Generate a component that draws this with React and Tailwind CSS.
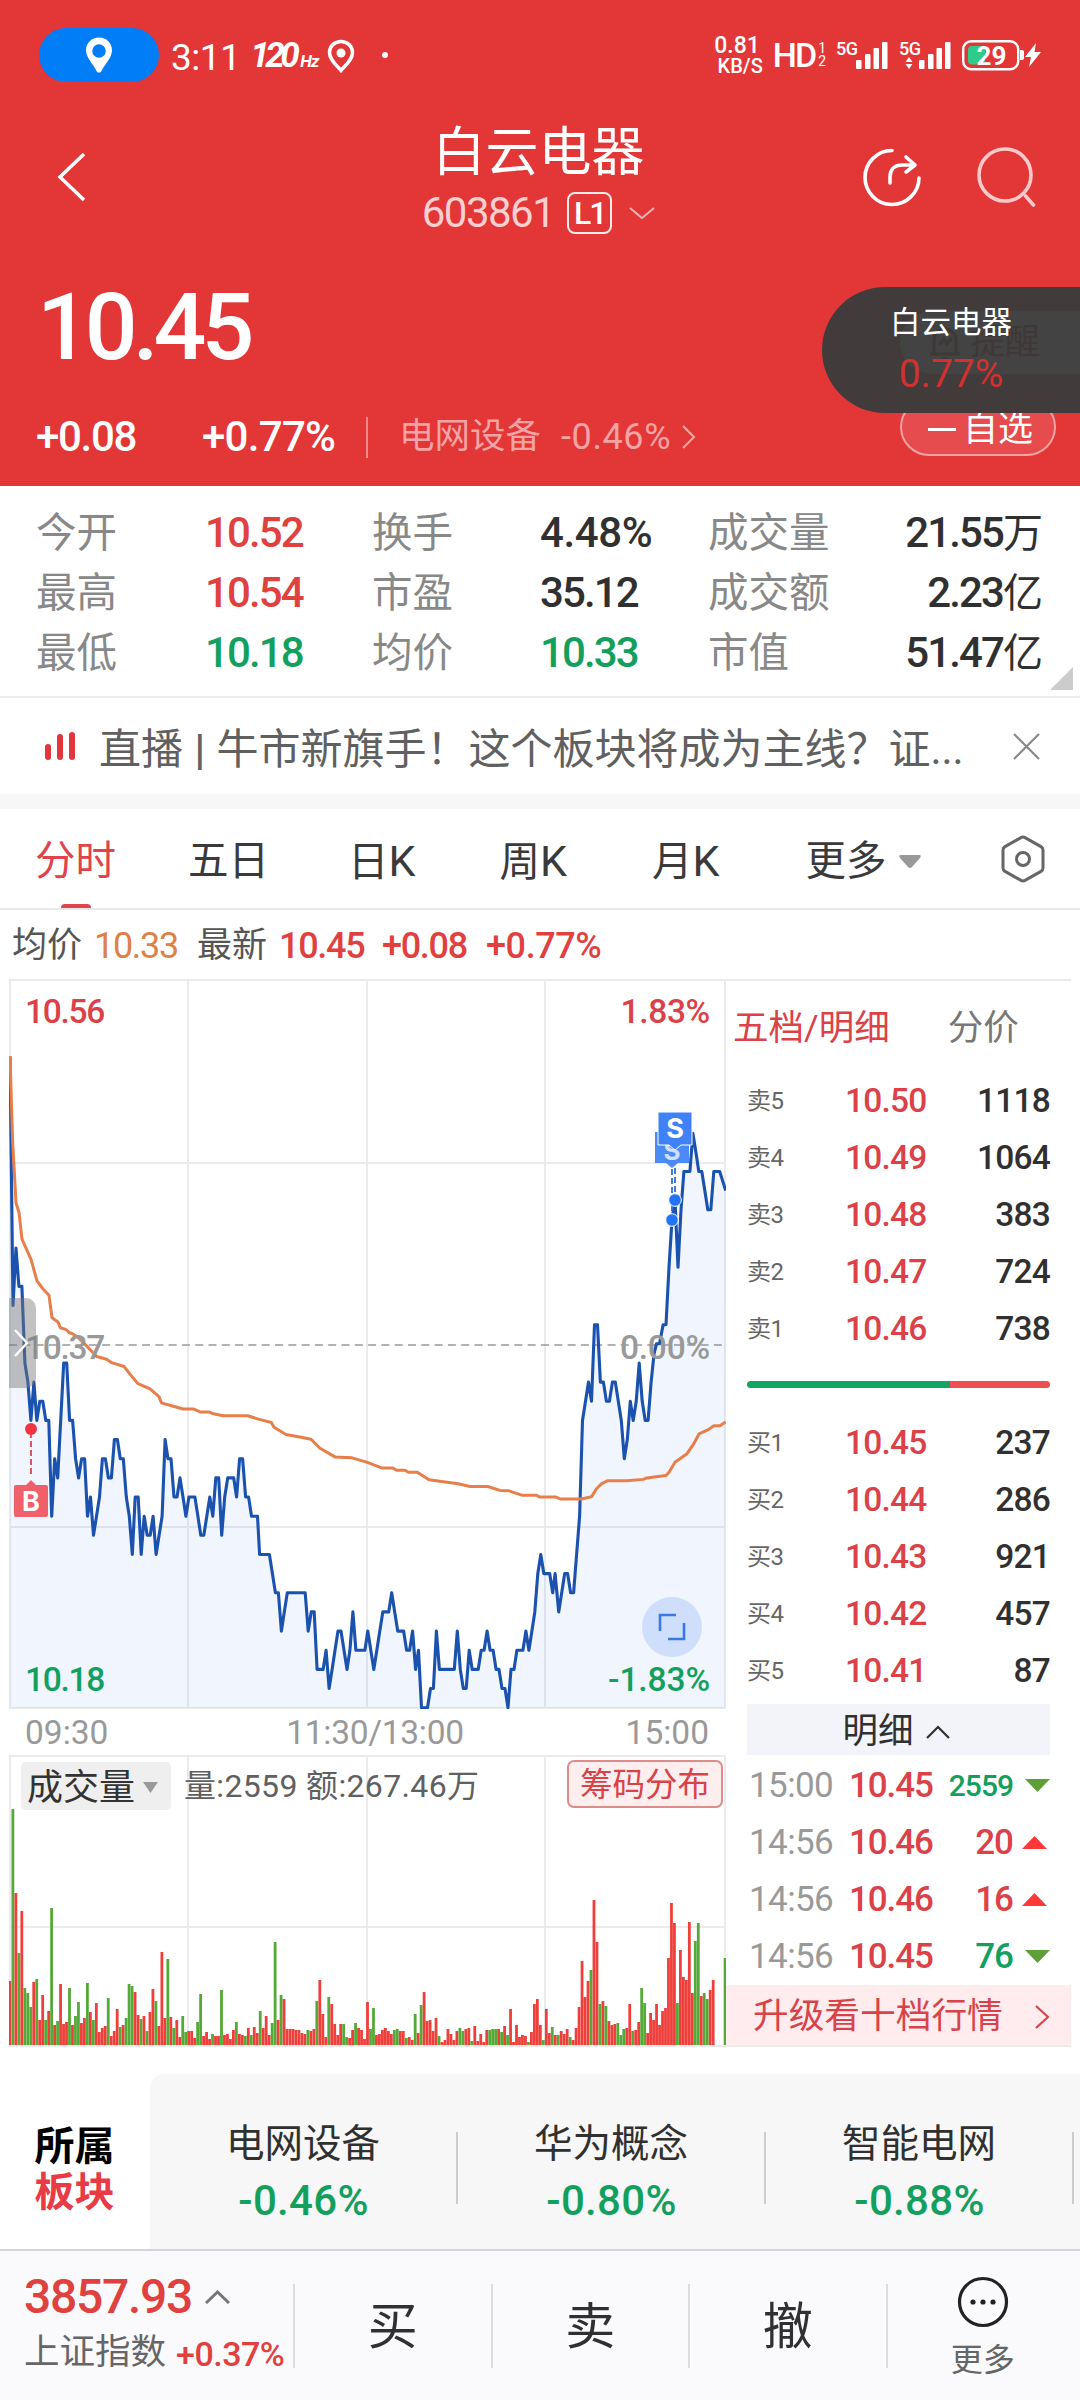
import { clsx } from "clsx";

// Quote summary under the header
const stats = [
  { label: "今开", value: "10.52", color: "text-[#e0413f]" },
  { label: "换手", value: "4.48%", color: "text-[#303030]" },
  { label: "成交量", value: "21.55", unit: "万", color: "text-[#303030]" },
  { label: "最高", value: "10.54", color: "text-[#e0413f]" },
  { label: "市盈", value: "35.12", color: "text-[#303030]" },
  { label: "成交额", value: "2.23", unit: "亿", color: "text-[#303030]" },
  { label: "最低", value: "10.18", color: "text-[#13a05e]" },
  { label: "均价", value: "10.33", color: "text-[#13a05e]" },
  { label: "市值", value: "51.47", unit: "亿", color: "text-[#303030]" },
];

const sells = [
  ["卖5", "10.50", "1118"],
  ["卖4", "10.49", "1064"],
  ["卖3", "10.48", "383"],
  ["卖2", "10.47", "724"],
  ["卖1", "10.46", "738"],
];

const buys = [
  ["买1", "10.45", "237"],
  ["买2", "10.44", "286"],
  ["买3", "10.43", "921"],
  ["买4", "10.42", "457"],
  ["买5", "10.41", "87"],
];

const ticks = [
  { time: "15:00", price: "10.45", qty: "2559", up: false },
  { time: "14:56", price: "10.46", qty: "20", up: true },
  { time: "14:56", price: "10.46", qty: "16", up: true },
  { time: "14:56", price: "10.45", qty: "76", up: false },
];

const boards = [
  { name: "电网设备", change: "-0.46%" },
  { name: "华为概念", change: "-0.80%" },
  { name: "智能电网", change: "-0.88%" },
];

// minute,cents above 10.00
const priceSeries =
  "0,52 1,39 2,42 3,40 4,40 5,36 6,35 7,33 8,35 9,33 10,34 11,34 12,33 13,33 14,28 15,31 16,30 17,33 18,36 19,36 20,33 21,33 22,31 23,30 24,31 25,31 26,28 27,29 28,27 29,28 30,29 31,31 32,31 33,30 34,30 35,32 36,32 37,31 38,31 39,29 40,28 41,26 42,29 43,29 44,26 45,28 46,27 47,27 48,28 49,26 50,27 51,28 52,32 53,31 54,31 55,29 56,29 57,30 58,29 59,28 60,29 62,29 63,28 64,27 65,27 66,28 67,29 68,28 69,30 70,30 71,27 72,29 73,30 75,30 76,29 77,31 78,31 79,29 80,29 81,28 83,28 83.7,26 87,26 88,25 89,24 90,24 91,22 92,23 93,24 99,24 100,22 101,23 102,23 103,20 105,20 106,21 107,19 108,20 109,21 110,22 111,22 112,21 113,20 114,21 115,23 116,21 119,21 120,22 121,21 122,20 123,21 124,22 125,23 127,23 128,24 129,23 130,22 132,22 133,21 134,21 135,22 136,20 137,21 138,18 140,18 141,19 142,19 143,22 144,20 149,20 150,22 151,20 152,19 153,19 154,21 155,20 157,20 158,21 159,21 160,22 161,21 162,21 163,20 164,20 165,19 166,19 167,18 168,20 169,20 170,21 172,21 173,22 174,21 175,22 176,23 177,25 178,26 179,25 181,25 182,24 182.8,25 184,23 185,24 186,25 187,25 188,24 189,24 190,26 191,28 192,33 193,34 194,35 195,34 196,38 197,38 198,35 199,35 200,34 201,34 202,35 203,35 204,34 205,33 206,31 207,32 208,34 209,33 210,34 211,36 212,34 213,33 214,33 215,35 216,36.5 216.8,37 217.8,37 219,38 220,38 221,41 222,43.5 223,44.5 224,41 225,44 226,46 228,46 229,48 230,47 231,46 232,46 233,45 234,44 235,44 236,46 238,46 240,45";

const pricePoints = priceSeries
  .split(" ")
  .map((p) => p.split(",").map(Number))
  .map(([m, c]) => `${(1 + m * 2.982).toFixed(1)},${((56 - c) * 19.15 + 1).toFixed(1)}`)
  .join(" ");

// Running average, on a grid three times as wide as the plot
const averagePoints =
  "30,180 38,360 48,487 57,507 66,563 93,605 111,650 129,667 147,680 156,727 174,736 181,748 199,752 207,758 216,760 234,768 261,787 290,808 320,814 335,821 372,829 390,845 414,865 450,876 477,892 484,905 520,912 550,918 582,918 600,924 627,924 640,928 670,932 743,932 775,939 814,946 822,956 858,971 895,976 933,981 960,1000 1005,1018 1056,1020 1100,1029 1145,1041 1177,1041 1190,1046 1215,1046 1225,1050 1252,1050 1287,1066 1330,1070 1375,1074 1410,1080 1463,1080 1500,1088 1527,1089 1565,1098 1608,1098 1620,1102 1668,1102 1680,1106 1745,1106 1775,1101 1790,1084 1805,1074 1822,1068 1880,1068 1930,1065 1940,1062 1998,1057 2007,1050 2025,1029 2060,1012 2080,992 2097,970 2125,961 2142,953 2160,953 2177,945";

// r = up minute, g = down minute, number = bar height
const volumes =
  "r64 g236 r152 g92 r134 g57 g52 g38 r63 g66 r25 r50 g25 r34 g137 r20 g24 r61 r21 r23 g57 r20 g29 g43 r22 r27 g62 r33 g25 r42 r13 r17 r19 g47 r9 r14 r36 g18 r20 g27 g61 g59 r53 r30 g26 r29 g14 r33 r56 g44 r19 r93 r27 g86 r28 g17 r25 r8 g29 g13 r14 r14 r7 g23 g51 r9 r13 r6 g11 r9 r9 g55 r10 r11 r6 r15 g23 r11 r10 g9 r17 g10 r18 r12 g34 r17 r29 r10 g22 g103 r25 g50 r46 r16 r16 r16 r15 r15 r12 r11 g15 r14 r16 g44 r65 r31 r8 g48 r41 r21 r10 r21 g21 g8 r7 r15 g22 r17 r15 r6 r43 g16 g37 r10 r11 r15 r17 r14 r11 g15 g16 r14 r14 g7 r8 r5 g31 r12 g40 r53 r24 r25 r14 r27 g9 r3 r5 r16 r11 r5 r14 g17 g14 r16 r17 g4 r19 r4 r11 r3 r15 g15 g16 g16 r16 g13 r19 g10 r36 r3 r20 r8 r10 r9 g3 r13 r41 r46 r20 g5 r36 r12 g18 r10 g10 r14 r11 r16 g8 r5 r17 r38 r84 r48 r64 g75 r145 r103 g41 r44 g39 r24 r20 r21 g22 g10 g16 r17 r41 g14 r15 r23 g57 g42 r12 r32 r25 r41 r20 r34 r37 r87 r142 r122 g42 r95 r68 r65 r123 r52 g104 g122 r49 g52 g46 r55 r65 r0 r0 r0 g87"
    .split(" ")
    .map((v) => ({ up: v[0] === "r", h: Number(v.slice(1)) }));

const Signal = ({ arrows }) => (
  <svg className="ml-[10px] h-[42px] w-[53px]" viewBox="0 -6 53 42" fill="#fff">
    <text x="0" y="15" fontSize="18" fontWeight="500" textLength="22">5G</text>
    <rect x="20" y="20" width="5.5" height="9" rx="1" />
    <rect x="29" y="14" width="5.5" height="15" rx="1" />
    <rect x="37.5" y="8" width="5.5" height="21" rx="1" />
    <rect x="46" y="2" width="5.5" height="27" rx="1" />
    {arrows && <path d="M6.500 22h7l-3.500-5zM6.500 24h7l-3.500 5z" />}
  </svg>
);

const StatusBar = () => (
  <div className="flex h-[110px] items-center pl-[39px] pr-[38px]">
    <div className="flex h-[54px] w-[120px] items-center justify-center rounded-full bg-[#007df7]">
      <svg className="h-9 w-7" viewBox="0 0 28 36" fill="#fff" fillRule="evenodd">
        <path d="M14 .5C6.500.5 1 6 1 13.200 1 21 8.500 27 11.500 34c.8 2 4.200 2 5 0C19.500 27 27 21 27 13.200 27 6 21.500.5 14 .5zm0 6.800a6.200 6.200 0 1 1 0 13.500 6.200 6.200 0 0 1 0-13.500z" />
      </svg>
    </div>
    <span className="ml-[12px] mt-[5px] text-[37px] tracking-[-0.500px]">3:11</span>
    <span className="ml-[10px] text-[35px] font-bold italic tracking-[-4.500px]">120</span>
    <span className="ml-[5px] mt-[12px] text-[17px] font-bold italic tracking-[-1px]">Hz</span>
    <svg className="ml-[9px] mt-px h-[34px] w-7" viewBox="0 0 28 34" fill="none">
      <path d="M14 2.500C7.500 2.500 2.500 7.200 2.500 13.500 2.500 21 9.500 26 14 31.500c4.500-5.500 11.500-10.500 11.500-18C25.500 7.200 20.500 2.500 14 2.500z" stroke="#fff" strokeWidth="3.500" />
      <circle cx="14" cy="14" r="4.500" fill="#fff" />
    </svg>
    <i className="ml-[27px] h-[6px] w-[6px] rounded-full bg-white" />

    <div className="ml-auto flex flex-col items-end font-medium">
      <span className="mr-[3px] text-[23px] leading-[21px]">0.81</span>
      <span className="text-[20px] leading-[20px]">KB/S</span>
    </div>
    <span className="ml-[10px] text-[34px] font-medium tracking-[-2px]">HD</span>
    <div className="ml-[3px] flex flex-col text-[14px] leading-[13px]">
      <span>1</span>
      <span>2</span>
    </div>
    <Signal />
    <Signal arrows />
    <svg className="ml-[10px] h-[32px] w-[80px]" viewBox="0 0 80 32">
      <rect x="1.200" y="2.200" width="55" height="28" rx="8" fill="none" stroke="#fff" strokeWidth="2.400" />
      <rect x="6" y="7" width="17" height="18.500" rx="4" fill="#2ecc8a" />
      <path d="M58 11h2a2 2 0 0 1 2 2v6a2 2 0 0 1-2 2h-2z" fill="#fff" />
      <path d="M74 4L63 18h6l-2 10 12-15h-6.500z" fill="#fff" />
      <text x="14.500" y="25.500" fontSize="26" fontWeight="700" fill="#fff">29</text>
    </svg>
  </div>
);

const TitleBar = () => (
  <div className="flex h-[140px] items-start justify-between pl-[57px] pr-[44px]">
    <svg className="mt-[42px] h-[50px] w-[138px]" viewBox="0 0 138 50" fill="none" stroke="#fff" strokeWidth="3.500">
      <path d="M27 2L3 25l24 23" />
    </svg>
    <div className="flex flex-col items-center pl-[20px]">
      <h1 className="mt-[17px] text-[53px]">白云电器</h1>
      <div className="mt-[11px] flex items-center pt-px">
        <span className="text-[42px] tracking-[-1.500px] text-[#fbd0d0]">603861</span>
        <span className="ml-[13px] flex h-[42px] w-[45px] items-center justify-center rounded-[8px] border-2 border-white/90 text-[32px] font-medium tracking-[-2px]">L1</span>
        <svg className="ml-[17px] h-3 w-[26px]" viewBox="0 0 26 12" fill="none" stroke="#f6b4b4" strokeWidth="2">
          <path d="M1 1l12 10L25 1" />
        </svg>
      </div>
    </div>
    <div className="mt-[37px] flex items-start gap-[54px]">
      <svg className="h-[60px] w-[60px]" viewBox="0 0 60 60" fill="none" stroke="#fff" strokeWidth="3.600" strokeLinecap="round" strokeLinejoin="round">
        <path d="M30 3.500A27 27 0 1 0 57 31" />
        <path d="M28 36v-6c0-8 5-12 12-12h12M44 10l9 8-9 7" />
      </svg>
      <svg className="h-[60px] w-[60px]" viewBox="0 0 60 60" fill="none" stroke="#ffc9c9" strokeWidth="3.600" strokeLinecap="round">
        <circle cx="29" cy="28" r="26" />
        <path d="M49.500 49l8 9" />
      </svg>
    </div>
  </div>
);

const FloatingQuote = () => (
  <div className="absolute right-0 top-[287px] h-[126px] w-[258px] overflow-hidden rounded-l-full bg-[#413b3b]">
    <div className="absolute left-[78px] top-[24px] flex h-[63px] w-[200px] items-center rounded-l-full bg-[#444343] pl-[28px] text-[35px] text-[#3e3838]">
      <svg className="mr-[8px] h-9 w-[34px]" viewBox="0 0 34 36" fill="none" stroke="#3e3838" strokeWidth="3">
        <path d="M2 29h30M6 29V15a11 11 0 0 1 22 0v14M11 20l5-6 3 5 5-6M13 34h8" />
      </svg>
      提醒
    </div>
    <div className="relative flex flex-col items-center pt-[21px]">
      <span className="text-[30.500px]">白云电器</span>
      <span className="mt-[16px] text-[39px] text-[#d3302f]">0.77%</span>
    </div>
  </div>
);

const Header = () => (
  <header className="relative h-[486px] bg-[#e33637] text-white">
    <StatusBar />
    <TitleBar />
    <div className="flex h-[152px] items-center pl-[37px] pt-[2px] text-[93px] font-medium tracking-[-5px]">10.45</div>
    <div className="flex h-[70px] items-center pl-[36px] pr-[24px]">
      <span className="w-[166px] text-[42px] font-medium tracking-[-1.300px]">+0.08</span>
      <span className="w-[164px] text-[42px] font-medium tracking-[-0.700px]">+0.77%</span>
      <i className="h-[41px] w-[2px] bg-[#ee8888]" />
      <span className="ml-[31px] text-[35.500px] text-[#f3a3a3]">电网设备</span>
      <span className="ml-[20px] text-[36px] tracking-[0.600px] text-[#f3a3a3]">-0.46%</span>
      <svg className="ml-[11px] h-6 w-[14px]" viewBox="0 0 14 24" fill="none" stroke="#f3a3a3" strokeWidth="2.200">
        <path d="M1 1l11 11L1 23" />
      </svg>
      <div className="ml-auto mt-[-20px] flex h-[58px] w-[156px] items-center rounded-full border-2 border-[#f3a3a3] bg-[#e64c4d] pl-[26px] pt-[4px] text-[35px]">
        <i className="mr-[7px] h-[3px] w-[28px] bg-white" />
        自选
      </div>
    </div>
    <FloatingQuote />
  </header>
);

const Stats = () => (
  <section className="relative h-[212px] border-b-2 border-[#ececec] pt-[17px]">
    <div className="grid grid-cols-[336px_336px_335px] pl-[36px]">
      {stats.map((s, i) => (
        <div key={s.label} className="flex h-[60px] items-center">
          <span className="text-[40.500px] text-[#888]">{s.label}</span>
          <span
            className={clsx(
              "text-[42px] font-medium",
              s.value.endsWith("%") ? "tracking-[-0.400px]" : "tracking-[-1.900px]",
              s.color,
              i % 3 === 0 && "ml-[88px]",
              i % 3 === 1 && "ml-[87px]",
              i % 3 === 2 && "ml-auto"
            )}
          >
            {s.value}
            {s.unit && <span className="text-[40px] font-normal tracking-normal">{s.unit}</span>}
          </span>
        </div>
      ))}
    </div>
    <svg className="absolute bottom-[6px] right-[7px] h-[23px] w-[23px]" viewBox="0 0 23 23" fill="#ccc">
      <path d="M23 0v23H0z" />
    </svg>
  </section>
);

const News = () => (
  <section className="flex h-[111px] items-center border-b-[15px] border-[#f7f7f7] pl-[45px] pr-[40px]">
    <div className="flex h-[28px] items-end gap-[6px]">
      <i className="h-[16px] w-[6px] rounded-full bg-[#e0363c]" />
      <i className="h-[26px] w-[6px] rounded-full bg-[#e0363c]" />
      <i className="h-[28px] w-[6px] rounded-full bg-[#e0363c]" />
    </div>
    <p className="ml-[24px] mt-[8px] whitespace-nowrap text-[42px] text-[#606060]">
      直播 <b className="mx-px font-bold">|</b> 牛市新旗手！这个板块将成为主线？证...
    </p>
    <svg className="ml-auto h-[27px] w-[27px]" viewBox="0 0 27 27" fill="none" stroke="#888" strokeWidth="2.200">
      <path d="M1 1l25 25M26 1L1 26" />
    </svg>
  </section>
);

const Tabs = () => (
  <nav className="relative flex h-[101px] items-center border-b-2 border-[#e8e8e8] pl-[35px] pr-[35px] pt-[5px] text-[40.500px] text-[#3a3a3a]">
    <span className="text-[#e0434a]">分时</span>
    <i className="absolute bottom-0 left-[61px] h-[4px] w-[30px] rounded-t-full bg-[#e0434a]" />
    <span className="ml-[72px]">五日</span>
    <span className="ml-[79px]">
      日<span className="text-[43px]">K</span>
    </span>
    <span className="ml-[84px]">
      周<span className="text-[43px]">K</span>
    </span>
    <span className="ml-[85px]">
      月<span className="text-[43px]">K</span>
    </span>
    <span className="ml-[86px]">更多</span>
    <svg className="ml-[13px] h-[13px] w-[22px]" viewBox="0 0 22 13" fill="#999">
      <path d="M2 0h18q3 0 1 3l-8 9q-2 2-4 0L1 3Q-1 0 2 0z" />
    </svg>
    <svg className="-mt-[4px] ml-auto h-[48px] w-[44px]" viewBox="0 0 44 48" fill="none" stroke="#666" strokeWidth="3">
      <path d="M20 2.600q2-1 4 0l16 9q2 1.200 2 3.400v18q0 2.200-2 3.400l-16 9q-2 1-4 0l-16-9q-2-1.200-2-3.400V15q0-2.200 2-3.400z" />
      <circle cx="22" cy="24" r="6.500" />
    </svg>
  </nav>
);

const Legend = () => (
  <div className="flex h-[69px] items-center pl-[12px] pt-[2px] text-[36px] tracking-[-1.300px] text-[#e0413f]">
    <span className="w-[82px] text-[35px] tracking-normal text-[#555]">均价</span>
    <span className="w-[103px] text-[#de8048]">10.33</span>
    <span className="w-[82px] text-[35px] tracking-normal text-[#555]">最新</span>
    <span className="w-[103px] font-medium">10.45</span>
    <span className="w-[104px] font-medium">+0.08</span>
    <span className="font-medium tracking-[-0.400px]">+0.77%</span>
  </div>
);

const PriceChart = () => (
  <div className="relative h-[730px] w-[717px]">
    <svg className="block h-[730px] w-[717px]" viewBox="0 0 717 730" fill="none">
      <g stroke="#ebebeb" strokeWidth="2">
        <path d="M1 0v729M179 0v729M358 0v729M536 0v729M716 0v729M0 1h717M0 184h717M0 548h717M0 729h717" />
      </g>
      <path d="M0 366h717" stroke="#999" strokeWidth="1.700" strokeDasharray="8 5.300" />
      <polygon points={`1,729 ${pricePoints} 716,729`} fill="#3b7cec" fillOpacity="0.08" />
      <polyline points={pricePoints} stroke="#1b52ae" strokeWidth="3.100" strokeLinejoin="round" />
      <svg width="717" height="730" viewBox="27 19 2151 1526" preserveAspectRatio="none">
        <polyline points={averagePoints} stroke="#e87f4a" strokeWidth="3" strokeLinejoin="round" vectorEffect="non-scaling-stroke" />
      </svg>
      {/* buy marker */}
      <g>
        <path d="M22 453v42" stroke="#d9454c" strokeWidth="1.800" strokeDasharray="6 3" />
        <circle cx="22" cy="450" r="6" fill="#ee3540" />
        <path d="M7 506h10l5-5 5 5h10q2 0 2 2v28q0 2-2 2H7q-2 0-2-2v-28q0-2 2-2z" fill="#f0606a" />
        <text x="22" y="532" textAnchor="middle" fontSize="27" fontWeight="700" fill="#fff" fontFamily="Inter">B</text>
      </g>
      {/* sell markers */}
      <g>
        <path d="M663 190v48M666 180v38" stroke="#2f6fd8" strokeWidth="1.800" strokeDasharray="6 3" />
        <path d="M646 153h34v31h-11l-6 5-6-5h-11z" fill="#4c8bf5" />
        <text x="663" y="181" textAnchor="middle" fontSize="26" fontWeight="700" fill="#cfe0ff" fontFamily="Inter">S</text>
        <path d="M649 133h34v33h-11l-6 5-6-5h-11z" fill="#3f82f8" stroke="#fff" strokeWidth="1" />
        <text x="666" y="159" textAnchor="middle" fontSize="27" fontWeight="700" fill="#fff" fontFamily="Inter">S</text>
        <circle cx="663" cy="241" r="6.300" fill="#2273f5" stroke="#fff" />
        <circle cx="666" cy="221" r="6.300" fill="#2273f5" stroke="#fff" />
      </g>
      {/* full screen button */}
      <circle cx="663" cy="648" r="30" fill="#cfdffb" />
      <path d="M651 652v-16h16M675 644v16h-16" stroke="#3a78e6" strokeWidth="2.600" />
    </svg>
    <div className="absolute inset-0 flex flex-col justify-between px-[16px] pb-[13px] pt-[16px] text-[33.500px] font-medium tracking-[-1.300px]">
      <div className="flex justify-between text-[#dc4148]">
        <span>10.56</span>
        <span className="tracking-[-0.300px]">1.83%</span>
      </div>
      <div className="flex justify-between pt-[4px] text-[#999]">
        <span>10.37</span>
        <span className="tracking-[-0.200px]">0.00%</span>
      </div>
      <div className="flex justify-between text-[#13a05e]">
        <span>10.18</span>
        <span className="tracking-[-0.100px]">-1.83%</span>
      </div>
    </div>
    {/* drawer handle */}
    <div className="absolute left-0 top-[319px] flex h-[90px] w-[27px] items-center rounded-r-[10px] bg-[#777]/45 pl-[5px]">
      <svg className="h-[28px] w-[14px]" viewBox="0 0 14 28" fill="none" stroke="#fff" strokeWidth="2.400">
        <path d="M1 1l12 13L1 27" />
      </svg>
    </div>
  </div>
);

const VolumeChart = () => (
  <div className="relative h-[292px] w-[717px]">
    <svg className="block h-[292px] w-[717px]" viewBox="0 0 717 292">
      <path d="M1 0v290M179 0v290M358 0v290M536 0v290M716 0v290M0 1h717M0 172h717M0 291h717" stroke="#ebebeb" strokeWidth="2" />
      {volumes.map((v, i) => (
        <rect key={i} x={i * 2.98 - 0.5} y={290 - v.h} width="2.800" height={v.h} fill={v.up ? "#ef3f3b" : "#55a938"} />
      ))}
    </svg>
    <div className="absolute inset-x-0 top-0 flex items-center pl-[12px] pt-[3px]">
      <div className="mt-[4px] flex h-[48px] w-[150px] items-center rounded-[5px] bg-[#efefef] pl-[6px] pt-[3px] text-[36px] text-[#333]">
        成交量
        <svg className="ml-[8px] h-[11px] w-[15px]" viewBox="0 0 15 11" fill="#999">
          <path d="M0 0h15L7.500 11z" />
        </svg>
      </div>
      <span className="ml-[13px] mt-[4px] text-[32px] tracking-[0.350px] text-[#606060]">量:2559 额:267.46万</span>
      <span className="ml-auto mr-[3px] flex h-[48px] w-[156px] items-center justify-center rounded-[7px] border-2 border-[#dd8b8b] bg-[#ffeeee] pt-[3px] text-[32.500px] text-[#d8434a]">筹码分布</span>
    </div>
  </div>
);

const Level = ({ row }) => (
  <div className="flex h-[57px] items-center text-[33.500px] tracking-[-0.800px]">
    <span className="w-[98px] text-[24px] tracking-[-0.500px] text-[#666]">{row[0]}</span>
    <span className="font-medium text-[#dc4148]">{row[1]}</span>
    <span className="ml-auto font-medium text-[#303030]">{row[2]}</span>
  </div>
);

const OrderBook = () => (
  <aside className="flex h-[1068px] w-[345px] flex-col border-t-2 border-[#ebebeb]">
    <div className="flex h-[91px] items-center pl-[7px] pt-[4px] text-[35.500px]">
      <span className="text-[#dc4148]">五档/明细</span>
      <span className="ml-[58px] text-[#777]">分价</span>
    </div>
    <div className="pl-[21px] pr-[21px]">
      {sells.map((row) => (
        <Level key={row[0]} row={row} />
      ))}
      <div className="mb-[26px] mt-[24px] flex h-[7px] overflow-hidden rounded-full">
        <i className="w-[203px] bg-[#13a563]" />
        <i className="flex-1 bg-[#ee4f52]" />
      </div>
      {buys.map((row) => (
        <Level key={row[0]} row={row} />
      ))}
      <div className="mb-[2px] mt-[5px] flex h-[51px] items-center justify-center bg-[#f3f4f9] pr-[5px] pt-[4px] text-[35.500px] text-[#303030]">
        明细
        <svg className="ml-[12px] h-[14px] w-[24px]" viewBox="0 0 24 14" fill="none" stroke="#303030" strokeWidth="2.200">
          <path d="M1 13L12 2l11 11" />
        </svg>
      </div>
      {ticks.map((t, i) => (
        <div key={i} className={clsx("flex h-[57px] items-center text-[35px]", t.up ? "text-[#dc4148]" : "text-[#13a05e]")}>
          <span className="w-[102px] pl-[2px] tracking-[-0.600px] text-[#999]">{t.time}</span>
          <span className="font-medium tracking-[-1.100px] text-[#dc4148]">{t.price}</span>
          <span className={clsx("ml-auto font-medium tracking-[-1px]", t.qty.length > 3 && "text-[30px]")}>{t.qty}</span>
          <svg className={clsx("h-[13px] w-[26px]", t.up ? "ml-[9px] mr-[2px]" : "ml-[11px]")} viewBox="0 0 26 13">
            {t.up ? <path d="M0 13L12.500 0 25 13z" fill="#ff3838" /> : <path d="M1 0h25L13.500 13z" fill="#5f9f38" />}
          </svg>
        </div>
      ))}
    </div>
    <div className="mt-auto flex h-[62px] items-center border-b-2 border-[#ebebeb] bg-[#ffecee] pl-[27px] pr-[22px] pt-[3px] text-[35.700px] text-[#d8434a]">
      升级看十档行情
      <svg className="ml-auto h-6 w-[15px]" viewBox="0 0 15 24" fill="none" stroke="#d8434a" strokeWidth="2.200">
        <path d="M2 1l12 11L2 23" />
      </svg>
    </div>
  </aside>
);

const Boards = () => (
  <section className="mt-[27px] flex h-[175px] overflow-hidden">
    <div className="flex w-[150px] shrink-0 flex-col items-center pr-px pt-[53px] text-[40px] font-bold">
      <span className="text-black">所属</span>
      <span className="mt-[6px] text-[#e83b45]">板块</span>
    </div>
    <div className="flex w-[930px] rounded-tl-[14px] bg-[#f7f7f7]">
      {boards.map((b) => (
        <div key={b.name} className="relative flex w-[308px] shrink-0 flex-col items-center pt-[51px]">
          <span className="pr-[2px] text-[38.500px] text-[#303030]">{b.name}</span>
          <span className="mt-[16px] pr-px text-[42px] font-medium tracking-[0.300px] text-[#13a05e]">{b.change}</span>
          <i className="absolute right-0 top-[58px] h-[72px] w-[2px] bg-[#ccc]" />
        </div>
      ))}
    </div>
  </section>
);

const BottomBar = () => (
  <footer className="flex h-[151px] items-center border-t-2 border-[#d4d5da] bg-[#fafafd]">
    <div className="flex h-full w-[293px] flex-col pl-[24px] pt-[22px]">
      <div className="flex items-center text-[48px] font-medium tracking-[-1.300px] text-[#e0413f]">
        3857.93
        <svg className="ml-[13px] h-[14px] w-[25px]" viewBox="0 0 25 14" fill="none" stroke="#777" strokeWidth="3">
          <path d="M1 13L12.500 2 24 13" />
        </svg>
      </div>
      <div className="mt-[13px] flex items-center whitespace-nowrap text-[35.500px] text-[#666]">
        上证指数
        <span className="ml-[10px] mt-[3px] text-[34px] font-medium tracking-[-0.500px] text-[#e0413f]">+0.37%</span>
      </div>
    </div>
    {["买", "卖", "撤"].map((label) => (
      <div key={label} className="flex w-[197.500px] items-center">
        <i className="h-[84px] w-[2px] bg-[#dcdce0]" />
        <span className="flex-1 pt-[2px] text-center text-[50px] text-[#303030]">{label}</span>
      </div>
    ))}
    <i className="h-[84px] w-[2px] bg-[#dcdce0]" />
    <div className="flex flex-1 flex-col items-center pr-[2px]">
      <svg className="h-[52px] w-[52px]" viewBox="0 0 52 52" fill="none" stroke="#222" strokeWidth="3.200">
        <circle cx="26" cy="26" r="23.500" />
        <g fill="#222" stroke="none">
          <circle cx="16" cy="26" r="2.600" />
          <circle cx="26" cy="26" r="2.600" />
          <circle cx="36" cy="26" r="2.600" />
        </g>
      </svg>
      <span className="mt-[16px] text-[32px] text-[#666]">更多</span>
    </div>
  </footer>
);

export default function App() {
  return (
    <div className="h-[2400px] w-[1080px] overflow-hidden bg-white font-['Roboto','Noto_Sans_CJK_SC',sans-serif] leading-none">
      <Header />
      <Stats />
      <News />
      <Tabs />
      <Legend />
      <main className="flex pl-[9px]">
        <div>
          <PriceChart />
          <div className="flex h-[46px] items-center justify-between pl-[16px] pr-[17px] pt-px text-[33.500px] text-[#999]">
            <span>09:30</span>
            <span className="pl-[16px] tracking-[-0.300px]">11:30/13:00</span>
            <span>15:00</span>
          </div>
          <VolumeChart />
        </div>
        <OrderBook />
      </main>
      <Boards />
      <BottomBar />
    </div>
  );
}
